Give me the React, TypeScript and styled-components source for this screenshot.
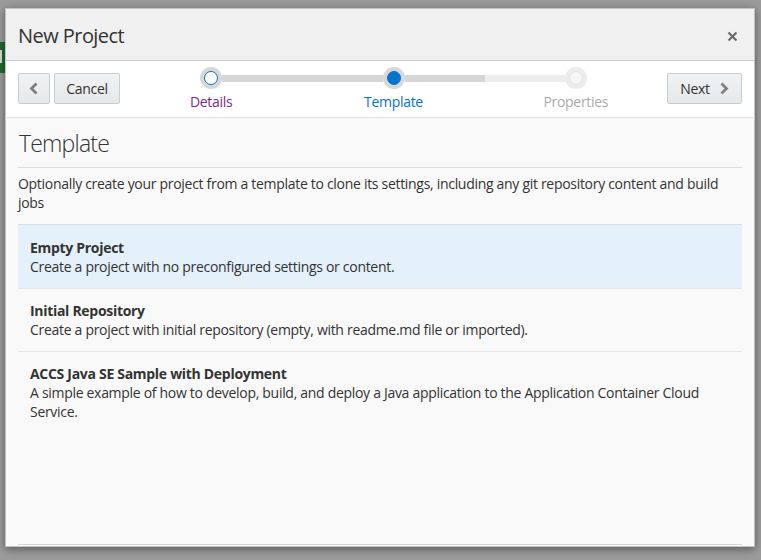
import React from "react";
import styled, { createGlobalStyle } from "styled-components";

const GlobalStyle = createGlobalStyle`
  html, body {
    margin: 0;
    padding: 0;
    background: #9b9b9b;
    font-family: "Open Sans", "Noto Sans", "Liberation Sans", sans-serif;
    color: #333;
  }
  * { box-sizing: border-box; }
`;

const Page = styled.div`
  position: relative;
  width: 761px;
  height: 560px;
  overflow: hidden;
  padding: 8px 0 0 5px;
`;

const BackdropTile = styled.div`
  position: absolute;
  left: 0;
  top: 42px;
  width: 6px;
  height: 31px;
  background: #1d6b30;
  &::after {
    content: "";
    position: absolute;
    left: 0;
    top: 8px;
    width: 2px;
    height: 13px;
    background: #cfe3d3;
  }
`;

const Dialog = styled.div`
  position: relative;
  width: 750px;
  height: 539px;
  display: flex;
  flex-direction: column;
  background: #f9f9f9;
  border: 1px solid #bfc4c8;
  box-shadow: 0 2px 8px rgba(0, 0, 0, 0.45);
`;

const Header = styled.div`
  height: 52px;
  flex: none;
  display: flex;
  align-items: center;
  justify-content: space-between;
  padding: 0 16px 0 12px;
  background: #f0f0f0;
  border-bottom: 1px solid #c4ced7;
`;

const Title = styled.h1`
  margin: 0;
  font-size: 20px;
  font-weight: 400;
  color: #333;
  letter-spacing: -0.55px;
  line-height: 26px;
  padding-top: 2px;
`;

const CloseButton = styled.button`
  width: 12px;
  height: 12px;
  padding: 0;
  border: 0;
  background: none;
  display: flex;
  align-items: center;
  justify-content: center;
  margin-top: 4px;
  color: #6b6b6b;
`;

const Toolbar = styled.div`
  height: 57px;
  flex: none;
  display: flex;
  align-items: flex-start;
  padding: 0 12px;
  background: #ffffff;
  border-bottom: 1px solid #e3e3e3;
`;

const ButtonGroup = styled.div`
  display: flex;
  gap: 4px;
  margin-top: 12px;
`;

const Button = styled.button<{ $w: number }>`
  width: ${(p) => p.$w}px;
  height: 31px;
  display: flex;
  align-items: center;
  justify-content: center;
  gap: 9px;
  padding: 0;
  border: 1px solid #c4ced7;
  border-radius: 2px;
  background: linear-gradient(#f1f2f3, #e6e8ea);
  font-family: inherit;
  font-size: 14px;
  color: #333;
  letter-spacing: -0.3px;
`;

const Train = styled.div`
  flex: 1;
  display: grid;
  grid-template-columns: repeat(3, 1fr);
  padding-top: 6px;
`;

const Step = styled.div`
  display: flex;
  flex-direction: column;
  align-items: stretch;
`;

const StepTrack = styled.div`
  display: flex;
  align-items: center;
  height: 22px;
`;

const Connector = styled.div<{ $tone: "none" | "dark" | "light" }>`
  flex: 1;
  height: 7px;
  background: ${(p) =>
    p.$tone === "dark" ? "#d6d6d6" : p.$tone === "light" ? "#ededed" : "transparent"};
`;

const Ring = styled.div<{ $light?: boolean }>`
  width: 22px;
  height: 22px;
  border-radius: 50%;
  flex: none;
  display: flex;
  align-items: center;
  justify-content: center;
  background: ${(p) => (p.$light ? "#ececec" : "#d8d8d8")};
`;

const Dot = styled.div<{ $state: "visited" | "current" | "future" }>`
  width: 14px;
  height: 14px;
  border-radius: 50%;
  background: ${(p) =>
    p.$state === "current" ? "#0572ce" : p.$state === "visited" ? "#ffffff" : "#f6f6f6"};
  border: 1px solid
    ${(p) => (p.$state === "future" ? "#e2e2e2" : "#0572ce")};
`;

const StepLabel = styled.div<{ $state: "visited" | "current" | "future" }>`
  margin-top: 3px;
  text-align: center;
  font-size: 14px;
  line-height: 19px;
  letter-spacing: -0.3px;
  color: ${(p) =>
    p.$state === "current" ? "#0572ce" : p.$state === "visited" ? "#7b2a82" : "#aaaaaa"};
`;

const Body = styled.div`
  flex: 1;
  padding: 11px 12px 0;
`;

const Heading = styled.h2`
  margin: 0;
  font-size: 23px;
  font-weight: 300;
  line-height: 29px;
  letter-spacing: -0.8px;
  color: #333;
  padding: 0 0 9px 1px;
  border-bottom: 1px solid #d6dfe6;
`;

const Intro = styled.p`
  margin: 6px 0 12px;
  font-size: 14px;
  line-height: 19px;
  letter-spacing: -0.3px;
  color: #333;
`;

const List = styled.div`
  border-top: 1px solid #d6dfe6;
`;

const Item = styled.div<{ $selected?: boolean; $first?: boolean }>`
  padding: ${(p) => (p.$first ? "13px" : "12px")} 12px 12px;
  background: ${(p) => (p.$selected ? "#e4f0fa" : "transparent")};
  border-top: ${(p) => (p.$first ? "0" : "1px solid #e8e8e8")};
  font-size: 14px;
  line-height: 19px;
  letter-spacing: -0.3px;
  color: #333;
`;

const ItemTitle = styled.div`
  font-weight: 700;
`;

const ItemText = styled.div``;

const Footer = styled.div`
  flex: none;
  margin: 0 12px;
  height: 2px;
  border-top: 1px solid #d6d6d6;
`;

const Chevron = ({ dir }: { dir: "left" | "right" }) => (
  <svg width="10" height="13" viewBox="0 0 10 13">
    <polyline
      points={dir === "left" ? "7.5,1.5 2.5,6.5 7.5,11.5" : "2.5,1.5 7.5,6.5 2.5,11.5"}
      fill="none"
      stroke="#808080"
      strokeWidth="2.8"
    />
  </svg>
);

const CloseIcon = () => (
  <svg width="11" height="11" viewBox="0 0 11 11">
    <path d="M1.5 1.5 L9.5 9.5 M9.5 1.5 L1.5 9.5" stroke="#6b6b6b" strokeWidth="2.2" />
  </svg>
);

type StepState = "visited" | "current" | "future";

const steps: { label: string; state: StepState; left: "none" | "dark" | "light"; right: "none" | "dark" | "light" }[] = [
  { label: "Details", state: "visited", left: "none", right: "dark" },
  { label: "Template", state: "current", left: "dark", right: "dark" },
  { label: "Properties", state: "future", left: "light", right: "none" },
];

const templates = [
  {
    title: "Empty Project",
    text: "Create a project with no preconfigured settings or content.",
    selected: true,
  },
  {
    title: "Initial Repository",
    text: "Create a project with initial repository (empty, with readme.md file or imported).",
  },
  {
    title: "ACCS Java SE Sample with Deployment",
    text: "A simple example of how to develop, build, and deploy a Java application to the Application Container Cloud Service.",
  },
];

export default function App() {
  return (
    <>
      <GlobalStyle />
      <Page>
        <BackdropTile />
        <Dialog>
          <Header>
            <Title>New Project</Title>
            <CloseButton aria-label="Close">
              <CloseIcon />
            </CloseButton>
          </Header>
          <Toolbar>
            <ButtonGroup>
              <Button $w={32} aria-label="Back">
                <Chevron dir="left" />
              </Button>
              <Button $w={66}>Cancel</Button>
            </ButtonGroup>
            <Train>
              {steps.map((s) => (
                <Step key={s.label}>
                  <StepTrack>
                    <Connector $tone={s.left} />
                    <Ring $light={s.state === "future"}>
                      <Dot $state={s.state} />
                    </Ring>
                    <Connector $tone={s.right} />
                  </StepTrack>
                  <StepLabel $state={s.state}>{s.label}</StepLabel>
                </Step>
              ))}
            </Train>
            <ButtonGroup>
              <Button $w={75}>
                Next
                <Chevron dir="right" />
              </Button>
            </ButtonGroup>
          </Toolbar>
          <Body>
            <Heading>Template</Heading>
            <Intro>
              Optionally create your project from a template to clone its settings, including any git
              repository content and build jobs
            </Intro>
            <List>
              {templates.map((t, i) => (
                <Item key={t.title} $selected={t.selected} $first={i === 0}>
                  <ItemTitle>{t.title}</ItemTitle>
                  <ItemText>{t.text}</ItemText>
                </Item>
              ))}
            </List>
          </Body>
          <Footer />
        </Dialog>
      </Page>
    </>
  );
}
